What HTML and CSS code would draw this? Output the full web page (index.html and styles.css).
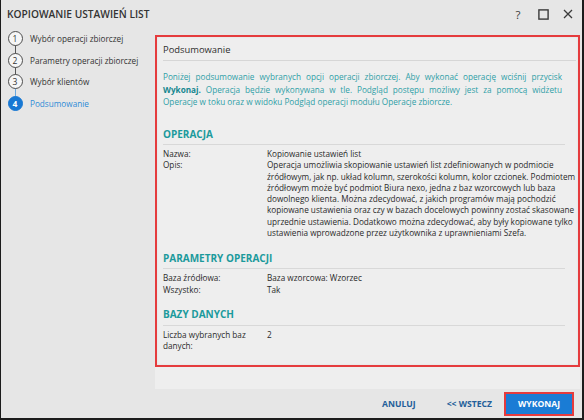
FILE: index.html
```html
<!DOCTYPE html>
<html lang="pl">
<head>
<meta charset="utf-8">
<title>Kopiowanie ustawień list</title>
<link rel="stylesheet" href="styles.css">
</head>
<body>
<div class="window">
  <div class="titlebar">
    <div class="title">KOPIOWANIE USTAWIEŃ LIST</div>
    <div class="win-controls">
      <span class="ctl help">?</span>
      <span class="ctl"><svg width="11" height="11" viewBox="0 0 11 11"><rect x="0.9" y="0.9" width="9.2" height="9.2" fill="none" stroke="#3a3a3a" stroke-width="1.4"/></svg></span>
      <span class="ctl"><svg width="10" height="10" viewBox="0 0 10 10"><path d="M1 1 L9 9 M9 1 L1 9" stroke="#3a3a3a" stroke-width="1.3" fill="none"/></svg></span>
    </div>
  </div>
  <div class="body">
    <nav class="sidebar">
      <div class="step done"><span class="circle">1</span><span class="label">Wybór operacji zbiorczej</span></div>
      <div class="step done"><span class="circle">2</span><span class="label">Parametry operacji zbiorczej</span></div>
      <div class="step done before-active"><span class="circle">3</span><span class="label">Wybór klientów</span></div>
      <div class="step active"><span class="circle">4</span><span class="label">Podsumowanie</span></div>
    </nav>
    <div class="rightcol">
      <div class="panel">
        <div class="summary">
          <div class="summary-head">Podsumowanie</div>
          <div class="intro">
            <span class="jl">Poniżej podsumowanie wybranych opcji operacji zbiorczej. Aby wykonać operację wciśnij przycisk</span>
            <span class="jl"><b>Wykonaj.</b> Operacja będzie wykonywana w tle. Podgląd postępu możliwy jest za pomocą widżetu</span>
            <span class="ll">Operacje w toku oraz w widoku Podgląd operacji modułu Operacje zbiorcze.</span>
          </div>

          <section class="sec">
            <h2 class="sec-title">OPERACJA</h2>
            <div class="rows">
              <div class="lbl">Nazwa:</div><div class="val">Kopiowanie ustawień list</div>
              <div class="lbl">Opis:</div>
              <div class="val">Operacja umożliwia skopiowanie ustawień list zdefiniowanych w podmiocie<br>źródłowym, jak np. układ kolumn, szerokości kolumn, kolor czcionek. Podmiotem<br>źródłowym może być podmiot Biura nexo, jedna z baz wzorcowych lub baza<br>dowolnego klienta. Można zdecydować, z jakich programów mają pochodzić<br>kopiowane ustawienia oraz czy w bazach docelowych powinny zostać skasowane<br>uprzednie ustawienia. Dodatkowo można zdecydować, aby były kopiowane tylko<br>ustawienia wprowadzone przez użytkownika z uprawnieniami Szefa.</div>
            </div>
          </section>

          <section class="sec">
            <h2 class="sec-title">PARAMETRY OPERACJI</h2>
            <div class="rows">
              <div class="lbl">Baza źródłowa:</div><div class="val">Baza wzorcowa: Wzorzec</div>
              <div class="lbl">Wszystko:</div><div class="val">Tak</div>
            </div>
          </section>

          <section class="sec">
            <h2 class="sec-title">BAZY DANYCH</h2>
            <div class="rows">
              <div class="lbl">Liczba wybranych baz danych:</div><div class="val">2</div>
            </div>
          </section>
        </div>
      </div>
      <div class="footer">
        <button class="btn link cancel">ANULUJ</button>
        <button class="btn link back">&lt;&lt; WSTECZ</button>
        <button class="btn primary">WYKONAJ</button>
      </div>
    </div>
  </div>
</div>
</body>
</html>
```

FILE: styles.css
```css
* { box-sizing: border-box; }
html, body { margin: 0; padding: 0; background: #ffffff; }
body { font-family: "Open Sans", "Noto Sans", sans-serif; color: #333; }

.window {
  width: 584px;
  height: 420px;
  background: #e6e6e6;
  border-left: 1px solid #1c1c1c;
  border-right: 2px solid #1c1c1c;
  border-bottom: 2px solid #1c1c1c;
  display: flex;
  flex-direction: column;
}

.titlebar {
  height: 28px;
  flex: none;
  display: flex;
  align-items: center;
  justify-content: space-between;
  padding-left: 6px;
  padding-right: 6px;
}
.title {
  font-size: 10.2px;
  font-weight: 600;
  color: #333;
}
.win-controls { display: flex; align-items: center; }
.ctl { display: flex; align-items: center; justify-content: center; width: 16px; height: 16px; margin-left: 9px; }
.ctl.help { font-size: 11.5px; color: #3a3a3a; font-weight: 400; margin-left: 0; }

.body { flex: 1; display: flex; min-height: 0; }

.sidebar { width: 154px; flex: none; }
.step {
  height: 21.5px;
  display: flex;
  align-items: center;
  position: relative;
}
.circle {
  width: 15px;
  height: 15px;
  margin-left: 6.5px;
  margin-right: 7.5px;
  border-radius: 50%;
  border: 1.3px solid #4d4d4d;
  background: #f6f6f6;
  display: flex;
  align-items: center;
  justify-content: center;
  font-size: 8.5px;
  color: #333;
  position: relative;
  z-index: 1;
}
.step::after {
  content: "";
  position: absolute;
  left: 13.5px;
  top: 17px;
  width: 1px;
  height: 9px;
  background: #555;
}
.step.before-active::after { background: #6aa8de; }
.step.active::after { display: none; }
.label { font-size: 8.2px; color: #333; white-space: nowrap; }
.step.active .circle { background: #1878d3; border-color: #1878d3; color: #fff; font-weight: 700; }
.step.active .label { color: #2d8bd6; }

.rightcol { flex: 1; display: flex; flex-direction: column; min-width: 0; }
.panel {
  margin-top: 7px;
  margin-right: 2px;
  background: #eeeeee;
  height: 354px;
  flex: none;
  padding-bottom: 22px;
}
.summary {
  height: 100%;
  border: 2px solid #e53b3d;
  box-shadow: inset 0 0 2px rgba(0,0,0,0.08);
  padding: 0 0 0 6px;
}
.summary-head {
  margin-right: 2px;
  padding-top: 6px;
  padding-bottom: 3px;
  line-height: 14px;
  font-size: 9.4px;
  color: #2e2e2e;
  border-bottom: 1px solid #d6d6d6;
}
.intro {
  margin: 10px 16px 18px 0;
  font-size: 8.2px;
  line-height: 12.5px;
  color: #2f9fa7;
}
.intro b { color: #168790; font-weight: 700; }
.jl { display: block; text-align: justify; text-align-last: justify; }
.ll { display: block; }

.sec { margin-top: 12.5px; margin-right: 13px; }
.sec-title {
  margin: 0;
  font-size: 10px;
  font-weight: 700;
  line-height: 14px;
  color: #1b9a9c;
  padding-bottom: 3.5px;
  border-bottom: 1px solid #d8d8d8;
}
.rows {
  margin-top: 3px;
  display: grid;
  grid-template-columns: 104px auto;
  font-size: 8.2px;
  line-height: 11.3px;
  color: #2a2a2a;
}
.lbl { padding-right: 8px; }
.val { white-space: nowrap; }

.footer {
  flex: 1;
  display: flex;
  align-items: center;
  justify-content: flex-end;
  padding-right: 8px;
}
.btn {
  font-family: "Open Sans", "Noto Sans", sans-serif;
  font-size: 8.6px;
  font-weight: 700;
  border: none;
  background: none;
  padding: 0;
  cursor: pointer;
}
.btn.link { color: #245f9a; }
.btn.cancel { margin-right: 31px; }
.btn.back { margin-right: 12px; }
.btn.primary {
  width: 70px;
  height: 24px;
  background: #1a7cd5;
  color: #fff;
  border: 2px solid #e53b3d;
}
```
